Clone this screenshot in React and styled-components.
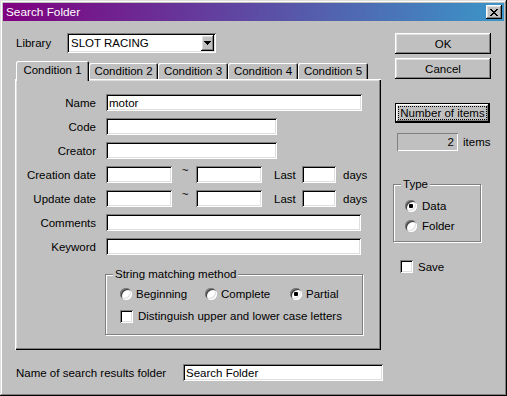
import React from "react";
import styled, { createGlobalStyle, css } from "styled-components";

const GlobalStyle = createGlobalStyle`
  html, body { margin: 0; padding: 0; background: #c0c0c0; }
  body {
    font-family: "Liberation Sans", Arial, sans-serif;
    font-size: 11.5px;
    color: #000;
  }
  * { box-sizing: border-box; }
`;

const raised = css`
  box-shadow: inset -1px -1px #000, inset 1px 1px #fff, inset -2px -2px #808080,
    inset 2px 2px #dfdfdf;
`;
const sunken = css`
  box-shadow: inset 1px 1px #808080, inset -1px -1px #fff, inset 2px 2px #000,
    inset -2px -2px #dfdfdf;
`;

const Window = styled.div`
  width: 507px;
  height: 396px;
  background: #c0c0c0;
  padding: 3px;
  display: flex;
  flex-direction: column;
  box-shadow: inset -1px -1px #000, inset 1px 1px #dfdfdf, inset -2px -2px #808080,
    inset 2px 2px #fff;
`;

const TitleBar = styled.div`
  height: 18px;
  display: flex;
  align-items: center;
  justify-content: space-between;
  padding: 0 2px;
  background: linear-gradient(to right, #800080, #3a96c8);
`;

const Title = styled.span`
  color: #fff;
  font-size: 11.8px;
  padding-left: 1px;
`;

const CloseButton = styled.div`
  width: 16px;
  height: 14px;
  background: #c0c0c0;
  display: flex;
  align-items: center;
  justify-content: center;
  ${raised}
`;

const Body = styled.div`
  display: flex;
  padding: 12px 0 0 12px;
  flex: 1;
`;

const LeftColumn = styled.div`
  width: 368px;
  display: flex;
  flex-direction: column;
`;

const LibraryRow = styled.div`
  display: flex;
  align-items: center;
  height: 20px;
`;

const LibraryLabel = styled.span`
  width: 52px;
  padding-left: 1px;
`;

const Combo = styled.div`
  width: 149px;
  height: 20px;
  background: #fff;
  display: flex;
  align-items: center;
  padding: 2px;
  ${sunken}
`;

const ComboText = styled.span`
  flex: 1;
  padding-left: 2px;
`;

const ComboArrow = styled.div`
  width: 13px;
  height: 16px;
  background: #c0c0c0;
  display: flex;
  align-items: center;
  justify-content: center;
  ${raised}
`;

const TabStrip = styled.div`
  display: flex;
  align-items: flex-end;
  height: 20px;
  margin-top: 8px;
  margin-bottom: -2px;
  padding-left: 1px;
  position: relative;
  z-index: 1;
`;

const Tab = styled.div`
  width: ${(p) => p.$w}px;
  height: ${(p) => (p.$active ? 20 : 16)}px;
  margin-bottom: ${(p) => (p.$active ? 0 : 2)}px;
  padding-bottom: ${(p) => (p.$active ? 2 : 0)}px;
  background: #c0c0c0;
  border-radius: 2px 2px 0 0;
  display: flex;
  align-items: center;
  justify-content: center;
  white-space: nowrap;
  box-shadow: inset 1px 1px #fff, inset -1px 0 #000, inset -2px 0 #808080;
`;

const TabPanel = styled.div`
  width: 366px;
  height: 271px;
  padding: 15px 0 0 2px;
  box-shadow: inset 1px 1px #fff, inset -1px -1px #000, inset -2px -2px #808080,
    inset 2px 2px #dfdfdf;
`;

const FormGrid = styled.div`
  display: grid;
  grid-template-columns: 80px auto;
  column-gap: 9px;
  row-gap: 7px;
  align-items: start;
`;

const FieldLabel = styled.div`
  height: 17px;
  display: flex;
  align-items: center;
  justify-content: flex-end;
  padding-right: 1px;
  white-space: nowrap;
`;

const Field = styled.div`
  width: ${(p) => p.$w}px;
  height: 17px;
  background: #fff;
  display: flex;
  align-items: center;
  padding: 0 3px;
  white-space: nowrap;
  ${sunken}
`;

const DateRow = styled.div`
  display: flex;
  align-items: center;
  height: 17px;
`;

const Tilde = styled.span`
  width: 24px;
  text-align: center;
  align-self: flex-start;
  line-height: 8px;
  padding-left: 2px;
`;

const RowText = styled.span`
  width: ${(p) => (p.$w ? `${p.$w}px` : "auto")};
  padding-left: ${(p) => p.$pad || 0}px;
  white-space: nowrap;
`;

const Group = styled.fieldset`
  margin: ${(p) => p.$margin};
  width: ${(p) => p.$w}px;
  padding: ${(p) => p.$pad};
  border: 1px solid #808080;
  box-shadow: inset 1px 1px #fff, 1px 1px #fff;
  min-inline-size: 0;
`;

const Legend = styled.legend`
  margin-left: ${(p) => p.$offset}px;
  padding: 0 2px;
  background: #c0c0c0;
  line-height: 13px;
`;

const OptionRow = styled.div`
  display: flex;
  align-items: center;
  height: 14px;
  margin-top: ${(p) => p.$top}px;
`;

const Option = styled.label`
  display: flex;
  align-items: center;
  gap: ${(p) => p.$gap || 4}px;
  width: ${(p) => (p.$w ? `${p.$w}px` : "auto")};
  white-space: nowrap;
`;

const Radio = styled.span`
  width: 12px;
  height: 12px;
  border-radius: 50%;
  background: #fff;
  position: relative;
  flex: none;
  box-shadow: inset 1px 1px #808080, inset -1px -1px #fff, inset 2px 2px #404040,
    inset -2px -2px #dfdfdf;
  &::after {
    content: "";
    display: ${(p) => (p.$checked ? "block" : "none")};
    position: absolute;
    left: 4px;
    top: 4px;
    width: 4px;
    height: 4px;
    border-radius: 1px;
    background: #000;
  }
`;

const Checkbox = styled.span`
  width: 13px;
  height: 13px;
  background: #fff;
  flex: none;
  ${sunken}
`;

const ResultRow = styled.div`
  display: flex;
  align-items: center;
  margin-top: 14px;
`;

const ResultLabel = styled.span`
  width: 168px;
  padding-left: 1px;
`;

const RightColumn = styled.div`
  margin-left: 10px;
  display: flex;
  flex-direction: column;
  align-items: flex-start;
`;

const PushButton = styled.div`
  margin: ${(p) => p.$top}px 0 0 2px;
  width: 96px;
  height: 21px;
  background: #c0c0c0;
  display: flex;
  align-items: center;
  justify-content: center;
  ${raised}
`;

const DefaultButton = styled.div`
  margin: 24px 0 0 2px;
  width: 95px;
  height: 20px;
  border: 1px solid #000;
  background: #c0c0c0;
  display: flex;
  align-items: center;
  justify-content: center;
  ${raised}
`;

const FocusRect = styled.span`
  border: 1px dotted #000;
  padding: 0 1px;
  line-height: 12px;
  white-space: nowrap;
`;

const CountRow = styled.div`
  display: flex;
  align-items: center;
  gap: 5px;
  margin: 10px 0 0 4px;
`;

const CountBox = styled.div`
  width: 61px;
  height: 18px;
  display: flex;
  align-items: center;
  justify-content: flex-end;
  padding-right: 4px;
  box-shadow: inset 1px 1px #808080, inset -1px -1px #fff;
`;

const SaveRow = styled.div`
  margin: 18px 0 0 7px;
`;

const tabs = [
  { label: "Condition 1", w: 73, active: true },
  { label: "Condition 2", w: 69 },
  { label: "Condition 3", w: 70 },
  { label: "Condition 4", w: 70 },
  { label: "Condition 5", w: 70 },
];

const CloseGlyph = () => (
  <svg width="8" height="7" viewBox="0 0 8 7" shapeRendering="crispEdges">
    {[0, 1, 2, 3, 4, 5, 6].map((i) => (
      <g key={i}>
        <rect x={i} y={i} width="2" height="1" fill="#000" />
        <rect x={6 - i} y={i} width="2" height="1" fill="#000" />
      </g>
    ))}
  </svg>
);

const ArrowGlyph = () => (
  <svg width="7" height="4" viewBox="0 0 7 4" shapeRendering="crispEdges">
    <rect x="0" y="0" width="7" height="1" fill="#000" />
    <rect x="1" y="1" width="5" height="1" fill="#000" />
    <rect x="2" y="2" width="3" height="1" fill="#000" />
    <rect x="3" y="3" width="1" height="1" fill="#000" />
  </svg>
);

const DateFields = () => (
  <DateRow>
    <Field $w={66} />
    <Tilde>~</Tilde>
    <Field $w={66} />
    <RowText $w={40} $pad={12}>
      Last
    </RowText>
    <Field $w={34} />
    <RowText $pad={7}>days</RowText>
  </DateRow>
);

export default function App() {
  return (
    <>
      <GlobalStyle />
      <Window>
        <TitleBar>
          <Title>Search Folder</Title>
          <CloseButton>
            <CloseGlyph />
          </CloseButton>
        </TitleBar>
        <Body>
          <LeftColumn>
            <LibraryRow>
              <LibraryLabel>Library</LibraryLabel>
              <Combo>
                <ComboText>SLOT RACING</ComboText>
                <ComboArrow>
                  <ArrowGlyph />
                </ComboArrow>
              </Combo>
            </LibraryRow>
            <TabStrip>
              {tabs.map((t) => (
                <Tab key={t.label} $w={t.w} $active={t.active}>
                  {t.label}
                </Tab>
              ))}
            </TabStrip>
            <TabPanel>
              <FormGrid>
                <FieldLabel>Name</FieldLabel>
                <Field $w={256}>motor</Field>
                <FieldLabel>Code</FieldLabel>
                <Field $w={171} />
                <FieldLabel>Creator</FieldLabel>
                <Field $w={171} />
                <FieldLabel>Creation date</FieldLabel>
                <DateFields />
                <FieldLabel>Update date</FieldLabel>
                <DateFields />
                <FieldLabel>Comments</FieldLabel>
                <Field $w={255} />
                <FieldLabel>Keyword</FieldLabel>
                <Field $w={255} />
                <span />
                <Group $w={258} $margin="6px 0 0 -1px" $pad="0 0 11px 14px">
                  <Legend $offset={-7}>String matching method</Legend>
                  <OptionRow $top={6}>
                    <Option $w={85}>
                      <Radio />
                      Beginning
                    </Option>
                    <Option $w={85}>
                      <Radio />
                      Complete
                    </Option>
                    <Option>
                      <Radio $checked />
                      Partial
                    </Option>
                  </OptionRow>
                  <OptionRow $top={8}>
                    <Option $gap={5}>
                      <Checkbox />
                      Distinguish upper and lower case letters
                    </Option>
                  </OptionRow>
                </Group>
              </FormGrid>
            </TabPanel>
            <ResultRow>
              <ResultLabel>Name of search results folder</ResultLabel>
              <Field $w={200}>Search Folder</Field>
            </ResultRow>
          </LeftColumn>
          <RightColumn>
            <PushButton $top={0}>OK</PushButton>
            <PushButton $top={4}>Cancel</PushButton>
            <DefaultButton>
              <FocusRect>Number of items</FocusRect>
            </DefaultButton>
            <CountRow>
              <CountBox>2</CountBox>
              <span>items</span>
            </CountRow>
            <Group $w={88} $margin="27px 0 0 0" $pad="0 0 8px 11px">
              <Legend $offset={-4}>Type</Legend>
              <OptionRow $top={8}>
                <Option $gap={5}>
                  <Radio $checked />
                  Data
                </Option>
              </OptionRow>
              <OptionRow $top={6}>
                <Option $gap={5}>
                  <Radio />
                  Folder
                </Option>
              </OptionRow>
            </Group>
            <SaveRow>
              <Option $gap={5}>
                <Checkbox />
                Save
              </Option>
            </SaveRow>
          </RightColumn>
        </Body>
      </Window>
    </>
  );
}
